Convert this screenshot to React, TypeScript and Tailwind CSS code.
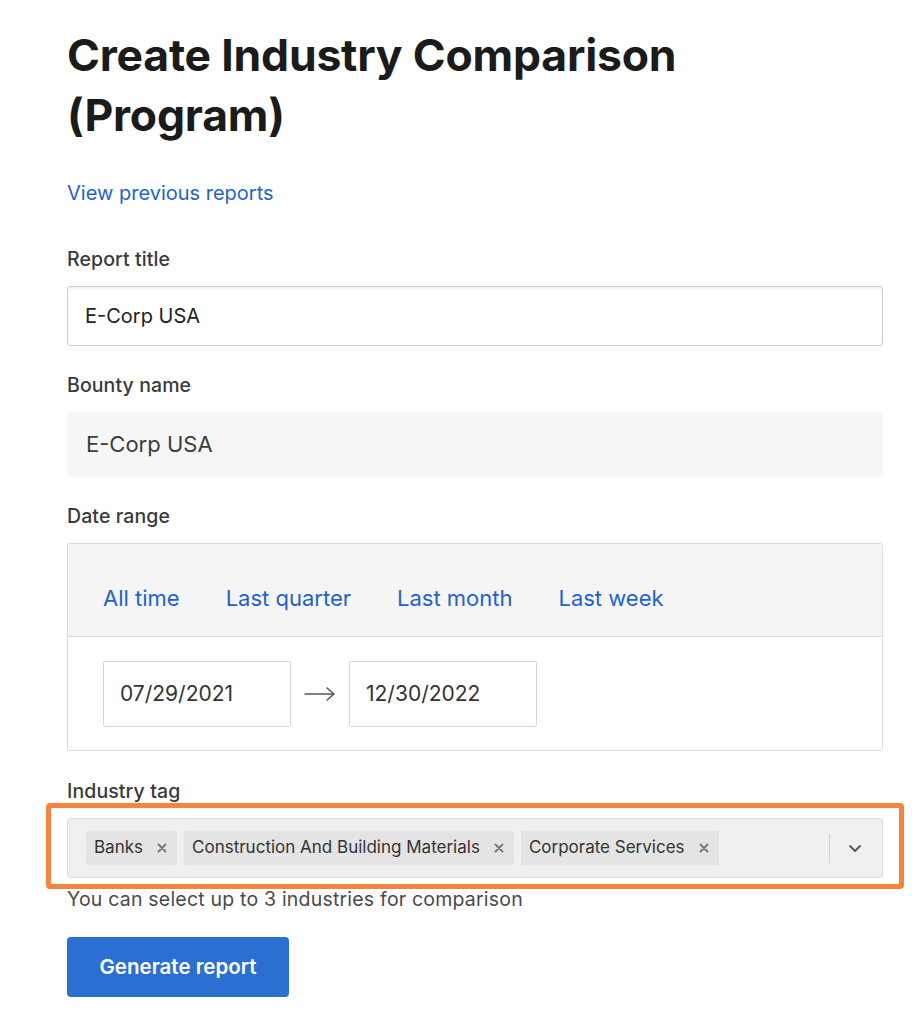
import React from "react";

function Label({ children }: { children: React.ReactNode }) {
  return <div className="text-[19.5px] leading-[24px] font-medium text-[#3a3a3a] tracking-[0.1px]">{children}</div>;
}

function Chip({ label }: { label: string }) {
  return (
    <div className="flex items-center h-[34px] rounded-[3px] bg-[#e4e4e4] pl-[8px] pr-[10px] gap-[14px] text-[17px] text-[#333]">
      <span>{label}</span>
      <svg width="10" height="10" viewBox="0 0 10 10" className="text-[#777]">
        <path d="M1.5 1.5 L8.5 8.5 M8.5 1.5 L1.5 8.5" stroke="currentColor" strokeWidth="1.8" strokeLinecap="round" />
      </svg>
    </div>
  );
}

export default function App() {
  return (
    <div className="min-h-[1024px] bg-white" style={{ fontFamily: "Inter, 'Noto Sans', sans-serif" }}>
      <div className="ml-[67px] w-[816px] pt-[25px]">
        <h1 className="text-[44.5px] leading-[60px] font-bold text-[#1b1b1b] tracking-[-0.2px]">
          Create Industry Comparison
          <br />
          (Program)
        </h1>
        <div className="mt-[34px] text-[20px] leading-[28px] text-[#1f63cc]">View previous reports</div>

        <div className="mt-[40px]">
          <Label>Report title</Label>
        </div>
        <div className="mt-[15px] h-[60px] border border-[#cfcfcf] rounded-[3px] bg-white shadow-[inset_0_2px_3px_rgba(0,0,0,0.06)] flex items-center px-[17px] text-[20px] text-[#222]">
          E-Corp USA
        </div>

        <div className="mt-[27px]">
          <Label>Bounty name</Label>
        </div>
        <div className="mt-[15px] h-[65px] bg-[#f6f6f6] flex items-center px-[19px] text-[22px] text-[#3d3d3d]">
          E-Corp USA
        </div>

        <div className="mt-[27px]">
          <Label>Date range</Label>
        </div>
        <div className="mt-[15px] border border-[#dcdcdc] rounded-[3px] overflow-hidden">
          <div className="h-[93px] bg-[#f5f5f5] border-b border-[#d9d9d9] flex items-center pt-[16px] gap-[46px] px-[35px] text-[22px] text-[#1f63cc]">
            <span>All time</span>
            <span>Last quarter</span>
            <span>Last month</span>
            <span>Last week</span>
          </div>
          <div className="bg-white flex items-center px-[35px] pt-[24px] pb-[23px]">
            <div className="w-[188px] h-[66px] border border-[#d6d6d6] rounded-[2px] flex items-center px-[16px] text-[21px] text-[#333]">
              07/29/2021
            </div>
            <div className="w-[58px] flex justify-center">
              <svg width="32" height="16" viewBox="0 0 32 16" className="text-[#555]">
                <path d="M1 8 H30 M23 2 L30 8 L23 14" stroke="currentColor" strokeWidth="1.5" fill="none" strokeLinecap="round" strokeLinejoin="round" />
              </svg>
            </div>
            <div className="w-[188px] h-[66px] border border-[#d6d6d6] rounded-[2px] flex items-center px-[16px] text-[21px] text-[#333]">
              12/30/2022
            </div>
          </div>
        </div>

        <div className="mt-[28px]">
          <Label>Industry tag</Label>
        </div>
        <div className="mx-[-21px] border-[5px] border-[#f7843e] rounded-[4px] pt-[10px] pb-[6px] px-[16px]">
          <div className="h-[60px] bg-[#f0f0f0] border border-[#dcdcdc] rounded-[3px] flex items-center pl-[18px] pr-[20px]">
            <div className="flex items-center gap-[7px] flex-1">
              <Chip label="Banks" />
              <Chip label="Construction And Building Materials" />
              <Chip label="Corporate Services" />
            </div>
            <div className="w-px h-[29px] bg-[#cfcfcf] mr-[18px]" />
            <svg width="14" height="10" viewBox="0 0 14 10" className="text-[#555]">
              <path d="M2 3 L7 8 L12 3" stroke="currentColor" strokeWidth="1.8" fill="none" strokeLinecap="round" strokeLinejoin="round" />
            </svg>
          </div>
        </div>
        <div className="text-[19.5px] leading-[20px] text-[#4a4a4a] tracking-[0.2px]">You can select up to 3 industries for comparison</div>

        <button className="mt-[28px] w-[222px] h-[60px] rounded-[4px] bg-[#2b6fd3] text-white text-[20.5px] font-semibold">
          Generate report
        </button>
      </div>
    </div>
  );
}
